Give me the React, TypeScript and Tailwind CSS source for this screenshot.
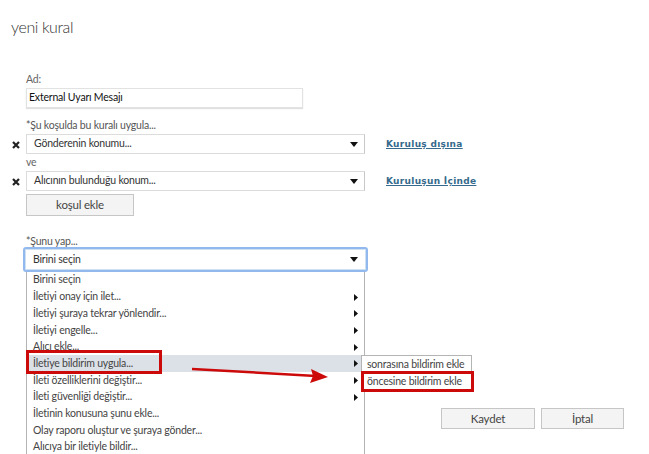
import React from "react";

const items = [
  { label: "Birini seçin", sub: false },
  { label: "İletiyi onay için ilet...", sub: true },
  { label: "İletiyi şuraya tekrar yönlendir...", sub: true },
  { label: "İletiyi engelle...", sub: true },
  { label: "Alıcı ekle...", sub: true },
  { label: "İletiye bildirim uygula...", sub: true, active: true },
  { label: "İleti özelliklerini değiştir...", sub: true },
  { label: "İleti güvenliği değiştir...", sub: true },
  { label: "İletinin konusuna şunu ekle...", sub: false },
  { label: "Olay raporu oluştur ve şuraya gönder...", sub: false },
  { label: "Alıcıya bir iletiyle bildir...", sub: false },
];

const DownCaret = () => (
  <svg width="8" height="5" viewBox="0 0 8 5" className="shrink-0">
    <path d="M0 0h8L4 5z" fill="#111" />
  </svg>
);

const RightCaret = () => (
  <svg width="4" height="7" viewBox="0 0 4 7" className="shrink-0">
    <path d="M0 0l4 3.5L0 7z" fill="#111" />
  </svg>
);

const RemoveX = () => (
  <svg width="8" height="8" viewBox="0 0 8 8">
    <path d="M1 1l6 6M7 1L1 7" stroke="#222" strokeWidth="2.2" />
  </svg>
);

// one condition row: x, dropdown, link
const ConditionRow = ({ value, link }: { value: string; link: string }) => (
  <div className="flex items-center -ml-[14px]">
    <div className="w-[14px] flex justify-start pt-[1px]">
      <RemoveX />
    </div>
    <div className="w-[339px] h-[20px] border border-[#dcdcdc] border-r-[#c8c8c8] flex items-center justify-between pl-[7px] pr-[6px] text-[#333]">
      <span>{value}</span>
      <DownCaret />
    </div>
    <a
      className="ml-[21px] mt-[1px] text-[#356a8c] font-bold underline text-[9px] tracking-[0.3px]"
      style={{ fontFamily: "'DejaVu Sans', Verdana, sans-serif" }}
    >
      {link}
    </a>
  </div>
);

export default function App() {
  return (
    <div
      className="relative w-[649px] h-[454px] overflow-hidden bg-white text-[10.5px] tracking-[-0.2px] text-[#333]"
      style={{ fontFamily: "Lato, 'Open Sans', sans-serif" }}
    >
      <h1 className="pt-[15px] pl-[11px] text-[16px] font-light leading-[24px] tracking-[-0.4px] text-[#333]">
        yeni kural
      </h1>

      <div className="pl-[26px]">
        <div className="mt-[33px] h-[14px] leading-[14px] text-[#666]">Ad:</div>
        <div className="mt-[2px] w-[277px] h-[20px] border border-[#e2e2e2] shadow-[0_1px_1px_rgba(0,0,0,0.12)] flex items-center pl-[2px] text-[#111]">
          External Uyarı Mesajı
        </div>

        <div className="mt-[10px] h-[14px] leading-[14px] text-[#555]">
          *Şu koşulda bu kuralı uygula...
        </div>
        <div className="mt-[2px]">
          <ConditionRow value="Gönderenin konumu..." link="Kuruluş dışına" />
        </div>
        <div className="h-[14px] leading-[14px] mt-[1px] text-[#666]">ve</div>
        <div className="mt-[2px]">
          <ConditionRow value="Alıcının bulunduğu konum..." link="Kuruluşun İçinde" />
        </div>
        <button className="mt-[3px] w-[108px] h-[22px] bg-[#f4f4f4] border border-[#c6c6c6] text-[11.5px] text-[#444]">
          koşul ekle
        </button>

        <div className="mt-[19px] h-[12px] leading-[12px] text-[#555]">*Şunu yap...</div>
        <div className="-ml-[3px] w-[345px] h-[25px] border-2 border-[#92b9ee] rounded-[3px]">
          <div className="h-full border border-[#cfe0f2] flex items-center justify-between pl-[7px] pr-[7px] text-[#333]">
            <span>Birini seçin</span>
            <DownCaret />
          </div>
        </div>
      </div>

      <div className="mt-[136px] flex justify-end gap-[6px] pr-[25px]">
        <button className="w-[94px] h-[21px] bg-[#f4f4f4] border border-[#c6c6c6] text-[11.5px] text-[#444]">
          Kaydet
        </button>
        <button className="w-[83px] h-[21px] bg-[#f4f4f4] border border-[#c6c6c6] text-[11.5px] text-[#444]">
          İptal
        </button>
      </div>

      {/* open dropdown list */}
      <div className="absolute left-[26px] top-[272px] w-[339px] h-[200px] bg-white border-l border-r border-[#b4b4b4]">
        {items.map((it) => (
          <div
            key={it.label}
            className={`h-[16.7px] flex items-center justify-between pl-[6px] pr-[6px] text-[#444] ${
              it.active ? "bg-[#dce0e7]" : ""
            }`}
          >
            <span>{it.label}</span>
            {it.sub && <RightCaret />}
          </div>
        ))}
      </div>

      {/* submenu */}
      <div className="absolute left-[361px] top-[355px] w-[111px] bg-white border border-[#b4b4b4] text-[#444] whitespace-nowrap">
        <div className="h-[17px] flex items-center pl-[5px]">sonrasına bildirim ekle</div>
        <div className="h-[17px] flex items-center pl-[5px]">öncesine bildirim ekle</div>
      </div>

      {/* red highlights */}
      <div className="absolute left-[26px] top-[350px] w-[136px] h-[24px] border-[3px] border-[#cc0a0a]" />
      <div className="absolute left-[361px] top-[371px] w-[113px] h-[21px] border-[3px] border-[#cc0a0a]" />
      <svg className="absolute left-0 top-0" width="649" height="454">
        <line x1="192" y1="369" x2="316" y2="376" stroke="#cc0a0a" strokeWidth="2.5" />
        <path d="M328 377 L311 369 L313 376 L310 383 Z" fill="#cc0a0a" />
      </svg>
    </div>
  );
}
